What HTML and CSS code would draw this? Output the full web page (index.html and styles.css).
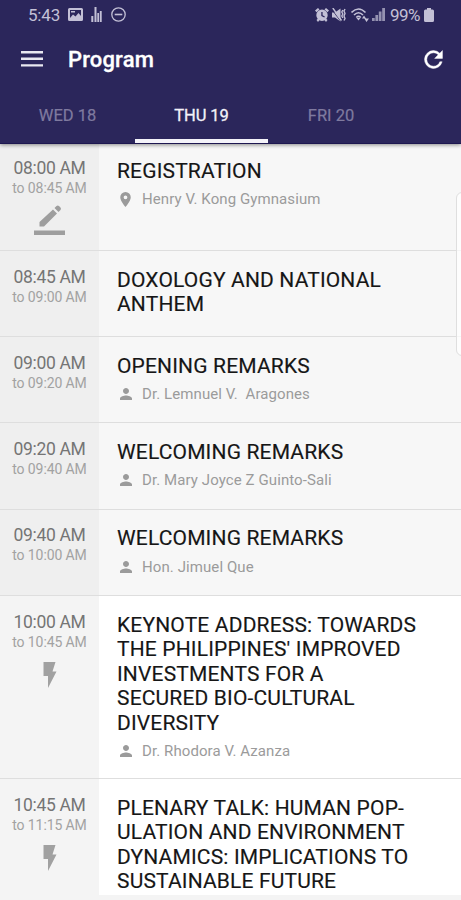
FILE: index.html
```html
<!DOCTYPE html>
<html lang="en">
<head>
<meta charset="utf-8">
<title>Program</title>
<link rel="stylesheet" href="styles.css">
</head>
<body>
<svg class="defs" width="0" height="0">
  <symbol id="person" viewBox="0 0 24 24"><path d="M12 12c2.200 0 4-1.800 4-4s-1.800-4-4-4-4 1.800-4 4 1.800 4 4 4zm0 2c-2.700 0-8 1.300-8 4v2h16v-2c0-2.700-5.300-4-8-4z"/></symbol>
  <symbol id="bolt" viewBox="0 0 14 26"><path d="M.5 0h12L9.500 9.500h4L5 26V14H.5z"/></symbol>
</svg>
<div class="screen">
  <header class="top">
    <div class="status">
      <span class="clock">5:43</span>
      <svg class="s-img" width="15" height="13" viewBox="0 0 15 13"><path fill-rule="evenodd" d="M1.500 0h12Q15 0 15 1.500v10q0 1.500-1.500 1.500h-12Q0 13 0 11.500v-10Q0 0 1.500 0zM2 2v8l3-3.500 2.500 2 3-3.500L13 8V2z"/><path d="M3 3h4v1.500H3z"/></svg>
      <svg class="s-bars" width="11" height="15" viewBox="0 0 11 15"><path d="M.3 9h2v6h-2zM3.500 0h2v15h-2zM6.300 6h1.700v9H6.300zM8.800 4h1.900v11H8.800z"/></svg>
      <svg class="s-dnd" width="15" height="15" viewBox="0 0 15 15"><circle cx="7.500" cy="7.500" r="6.700" fill="none" stroke="currentColor" stroke-width="1.300"/><path d="M3.700 6.700h7.600v1.600H3.700z"/></svg>
      <span class="grow"></span>
      <svg class="s-alarm" width="14" height="14" viewBox="0 0 14 14"><path d="M0 2.500 3 0l1.500 1.500-3 2.800zM14 2.500 11 0 9.500 1.500l3 2.800zM1.500 12l2-2 1.500 1.500L3 14zM12.500 12l-2-2L9 11.500l2 2.500z"/><path fill-rule="evenodd" d="M7 1.500a5.700 5.700 0 1 1 0 11.400A5.700 5.700 0 0 1 7 1.500zM6.300 4v4l3 1.500.6-1L7.600 7.300V4z"/></svg>
      <svg class="s-mute" width="14" height="14" viewBox="0 0 14 14"><path d="M0 4.500h3L8.500.5v13L3 9.500H0z"/><path d="M0 1.800 8.500 13" stroke="#2b265b" stroke-width=".8"/><path d="M.8 0 9.500 12.500M10.800 2l-1 2 1 2-1 2 1 2M13 1l-1 2 1 2.500-1 2.500 1 2.500-1 2" fill="none" stroke="currentColor" stroke-width="1.400"/></svg>
      <svg class="s-wifi" width="18" height="14" viewBox="0 0 18 14"><path d="M.5 4.500Q7.500-2.500 14.500 4.500M3 7q4.500-4.500 9 0M5.300 9.500q2.200-2.200 4.500 0" fill="none" stroke="currentColor" stroke-width="1.600"/><path d="m7.500 12.500-2-2.500h4zM11 10.500 13 7.500l2 3zM15.500 14l-2.200-3.500H18z"/></svg>
      <svg class="s-signal" width="13" height="13" viewBox="0 0 13 13"><path d="M0 10h2.700v3H0zM3.400 7h2.700v6H3.400zM6.800 3.500h2.700V13H6.800zM10.200 0H13v13h-2.800z"/></svg>
      <span class="battery-text">99%</span>
      <svg class="s-battery" width="10" height="14" viewBox="0 0 10 14"><path d="M3 0h4v1.500h1.500Q10 1.500 10 3v9.500Q10 14 8.500 14h-7Q0 14 0 12.500V3q0-1.500 1.500-1.500H3z"/></svg>
    </div>
    <div class="bar">
      <svg class="menu" width="22" height="16" viewBox="0 0 22 16"><path d="M0 0h22v2.400H0zM0 6.600h22V9H0zM0 13.200h22v2.400H0z"/></svg>
      <h1>Program</h1>
      <svg class="refresh" width="19" height="19" viewBox="3.500 3.500 17 17"><path stroke="currentColor" stroke-width=".4" d="M17.650 6.350A7.958 7.958 0 0 0 12 4a8 8 0 1 0 7.730 10h-2.080A5.990 5.990 0 0 1 12 18a6 6 0 1 1 0-12c1.660 0 3.140.69 4.220 1.780L13 11h7V4l-2.350 2.350z"/></svg>
    </div>
    <nav class="tabs">
      <span class="tab">WED 18</span>
      <span class="tab active">THU 19</span>
      <span class="tab">FRI 20</span>
    </nav>
  </header>
  <main class="list">
    <section class="row past first">
      <div class="when"><div class="start">08:00 AM</div><div class="end">to 08:45 AM</div>
        <svg class="pencil" width="31" height="31" viewBox="0 0 31 31"><path d="M0 25.500h31V30H0zM5.500 17 19 4.500l4 4L10 21.500H5.500zM20.500 3l2-2q1.300-1 2.500 0L26.500 2.500q1 1.200 0 2.500l-2 2z"/></svg></div>
      <div class="what"><h2>REGISTRATION</h2>
        <p class="meta"><svg class="pin" width="11" height="15" viewBox="5 2 14 20"><path d="M12 2a7 7 0 0 0-7 7c0 5.250 7 13 7 13s7-7.750 7-13a7 7 0 0 0-7-7zm0 9.500a2.500 2.500 0 1 1 0-5 2.500 2.500 0 0 1 0 5z"/></svg><span>Henry V. Kong Gymnasium</span></p></div>
    </section>
    <section class="row past">
      <div class="when"><div class="start">08:45 AM</div><div class="end">to 09:00 AM</div></div>
      <div class="what"><h2>DOXOLOGY AND NATIONAL<br>ANTHEM</h2></div>
    </section>
    <section class="row past">
      <div class="when"><div class="start">09:00 AM</div><div class="end">to 09:20 AM</div></div>
      <div class="what"><h2>OPENING REMARKS</h2><p class="meta"><svg class="person"><use href="#person"/></svg><span>Dr. Lemnuel V.&nbsp; Aragones</span></p></div>
    </section>
    <section class="row past">
      <div class="when"><div class="start">09:20 AM</div><div class="end">to 09:40 AM</div></div>
      <div class="what"><h2>WELCOMING REMARKS</h2><p class="meta"><svg class="person"><use href="#person"/></svg><span>Dr. Mary Joyce Z Guinto-Sali</span></p></div>
    </section>
    <section class="row past">
      <div class="when"><div class="start">09:40 AM</div><div class="end">to 10:00 AM</div></div>
      <div class="what"><h2>WELCOMING REMARKS</h2><p class="meta"><svg class="person"><use href="#person"/></svg><span>Hon. Jimuel Que</span></p></div>
    </section>
    <section class="row keynote">
      <div class="when"><div class="start">10:00 AM</div><div class="end">to 10:45 AM</div><svg class="bolt"><use href="#bolt"/></svg></div>
      <div class="what"><h2>KEYNOTE ADDRESS: TOWARDS<br>THE PHILIPPINES' IMPROVED<br>INVESTMENTS FOR A<br>SECURED BIO-CULTURAL<br>DIVERSITY</h2><p class="meta"><svg class="person"><use href="#person"/></svg><span>Dr. Rhodora V. Azanza</span></p></div>
    </section>
    <section class="row last">
      <div class="when"><div class="start">10:45 AM</div><div class="end">to 11:15 AM</div><svg class="bolt"><use href="#bolt"/></svg></div>
      <div class="what"><h2>PLENARY TALK: HUMAN POP-<br>ULATION AND ENVIRONMENT<br>DYNAMICS: IMPLICATIONS TO<br>SUSTAINABLE FUTURE</h2></div>
    </section>
  </main>
  <div class="edge-handle"></div>
</div>
</body>
</html>
```
FILE: styles.css
```css
* { box-sizing: border-box; }
body { margin: 0; font-family: Roboto, "Liberation Sans", sans-serif; }
h1, h2, p { margin: 0; font-weight: 400; }
svg { display: block; fill: currentColor; flex: none; }
.defs { position: absolute; }
.screen { position: relative; width: 461px; height: 900px; overflow: hidden; background: #f4f4f4; }

.top { height: 143.500px; background: #2b265b; color: #fff; border-bottom: 1px solid #1d1750; box-shadow: 0 1px 4px rgba(0,0,0,.45); position: relative; }
.status { display: flex; align-items: center; height: 29px; padding: 0 27px 0 28px; color: #c3c0d6; font-size: 17px; }
.clock { width: 40px; letter-spacing: -.2px; }
.s-bars { margin-left: 8px; }
.s-dnd { margin-left: 9px; }
.grow { flex: 1; }
.s-mute { margin-left: 3px; }
.s-wifi { margin-left: 5px; }
.s-signal { margin-left: 3px; opacity: .7; }
.battery-text { margin-left: 5px; width: 34px; font-size: 17px; letter-spacing: -.5px; }
.bar { display: flex; align-items: center; height: 60px; padding: 0 18px 0 21px; }
.menu { color: #e9e8f1; }
.bar h1 { flex: 1; padding: 1px 0 0 25px; font-size: 22px; font-weight: 500; letter-spacing: .15px; -webkit-text-stroke: .3px; }
.tabs { display: grid; grid-template-columns: 135px 133px 126px; height: 54px; }
.tab { padding-top: 17px; text-align: center; font-size: 16.500px; line-height: 20px; color: #7f7a9f; -webkit-text-stroke: .2px; }
.active { color: #f3f2f8; border-bottom: 4px solid #f4f3f9; letter-spacing: -.1px; -webkit-text-stroke: .3px; }

.row { display: grid; grid-template-columns: 99px 1fr; height: 86.200px; background: #fff; border-bottom: 1.500px solid #dedede; }
.first { height: 107.500px; }
.first .when { padding-top: 13.500px; }
.first .what { padding-top: 15.300px; }
.keynote { height: 183px; }
.last { height: 116.500px; border-bottom: 0; }
.past { background: #f7f7f7; }
.when { background: #f4f4f4; text-align: center; white-space: nowrap; padding-top: 14.700px; }
.past .when { background: #efefef; }
.start { font-size: 17.500px; line-height: 22px; letter-spacing: -.35px; color: #757575; }
.end { font-size: 14px; line-height: 19.500px; letter-spacing: -.1px; color: #a2a2a2; }
.what { padding: 16.700px 0 0 18px; white-space: nowrap; }
.what h2 { font-size: 21px; line-height: 24.400px; letter-spacing: .16px; color: #161616; -webkit-text-stroke: .15px; }
.meta { display: flex; align-items: center; height: 20px; margin-top: 6px; color: #9b9b9b; font-size: 15px; letter-spacing: .09px; }
.meta span { margin-left: 7px; }
.person { width: 18px; height: 18px; }
.pin { margin: 0 4px 0 3px; }
.pencil { margin: 6px auto 0; color: #9e9e9e; }
.bolt { width: 14px; height: 26px; margin: 9px auto 0; color: #a1a1a1; }
.keynote .when, .last .when { padding-top: 15.500px; }
.keynote .what, .last .what { padding-top: 17.300px; }

.edge-handle { position: absolute; right: -12px; top: 192px; width: 17px; height: 164px; border: 1px solid #dfdfdf; border-radius: 6px; background: rgba(255,255,255,.7); }
```
